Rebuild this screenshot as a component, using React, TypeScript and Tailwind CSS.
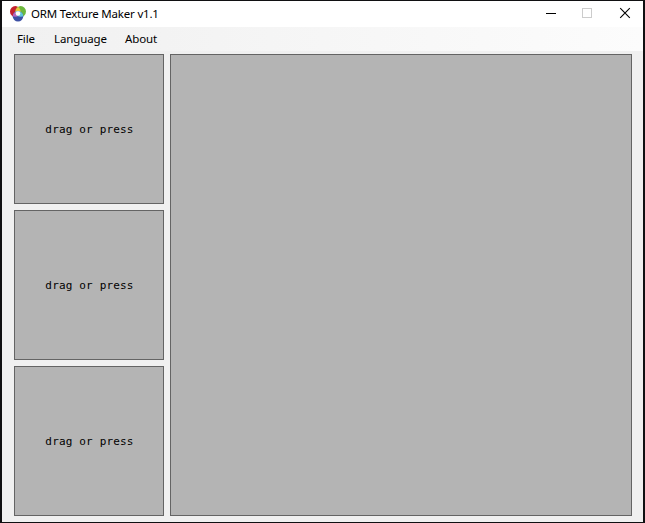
function Logo() {
  return (
    <svg className="mb-px" width="16" height="16" viewBox="0 0 16 16">
      <defs>
        <clipPath id="red"><circle cx="5.3" cy="5.4" r="5.3" /></clipPath>
        <clipPath id="green"><circle cx="10.7" cy="5.4" r="5.3" /></clipPath>
      </defs>
      <circle cx="5.3" cy="5.4" r="5.3" fill="#c5222e" />
      <circle cx="10.7" cy="5.4" r="5.3" fill="#6cb83c" />
      <circle cx="8" cy="10.2" r="5.3" fill="#3c50a4" />
      <circle cx="10.7" cy="5.4" r="5.3" fill="#e8c83c" clipPath="url(#red)" />
      <circle cx="8" cy="10.2" r="5.3" fill="#b565bd" clipPath="url(#red)" />
      <circle cx="8" cy="10.2" r="5.3" fill="#62c5dc" clipPath="url(#green)" />
      <circle cx="8" cy="7.5" r="2.3" fill="#fffdf4" />
    </svg>
  );
}

function DropSlot() {
  return (
    <button className="flex h-[150px] w-[150px] items-center justify-center border border-[#646464] bg-[#b4b4b4] pt-0.5 pl-px font-['DejaVu_Sans_Mono',monospace] text-[11px] leading-4 tracking-[0.17px] text-black">
      <span className="whitespace-pre">drag or press</span>
    </button>
  );
}

export default function App() {
  return (
    <div className="flex h-[523px] w-[645px] flex-col overflow-hidden border-t border-r-2 border-b border-l-2 border-[#101012] bg-[#f0f0f0] font-['Noto_Sans',sans-serif] text-xs text-black">
      <header className="flex h-[26px] shrink-0 items-center bg-white pl-2">
        <Logo />
        <h1 className="ml-[5px] flex-1 pb-px text-[11.5px] leading-4 tracking-[-0.2px] whitespace-nowrap">ORM Texture Maker v1.1</h1>
        <svg width="104" height="26" viewBox="0 0 104 26" fill="none" shapeRendering="crispEdges">
          <path d="M7 12.5H17" stroke="#000" />
          <rect x="43.5" y="7.5" width="9" height="9" stroke="#ccc" />
          <path d="M81.2 7.2L90.8 16.8M90.8 7.2L81.2 16.8" stroke="#000" strokeWidth="1.1" shapeRendering="auto" />
        </svg>
      </header>
      <nav className="flex h-6 shrink-0 items-center bg-linear-to-r from-[#f0f0f0] to-[#fcfcfc] pb-px pl-[15px] text-[11.5px] leading-4 tracking-[-0.12px]">
        <span className="w-[37px]">File</span>
        <span className="w-[71px]">Language</span>
        <span>About</span>
      </nav>
      <main className="flex gap-1.5 pt-[3px] pl-3">
        <div className="flex flex-col gap-1.5">
          <DropSlot />
          <DropSlot />
          <DropSlot />
        </div>
        <div className="h-[462px] w-[462px] border border-[#646464] bg-[#b4b4b4]" />
      </main>
    </div>
  );
}
